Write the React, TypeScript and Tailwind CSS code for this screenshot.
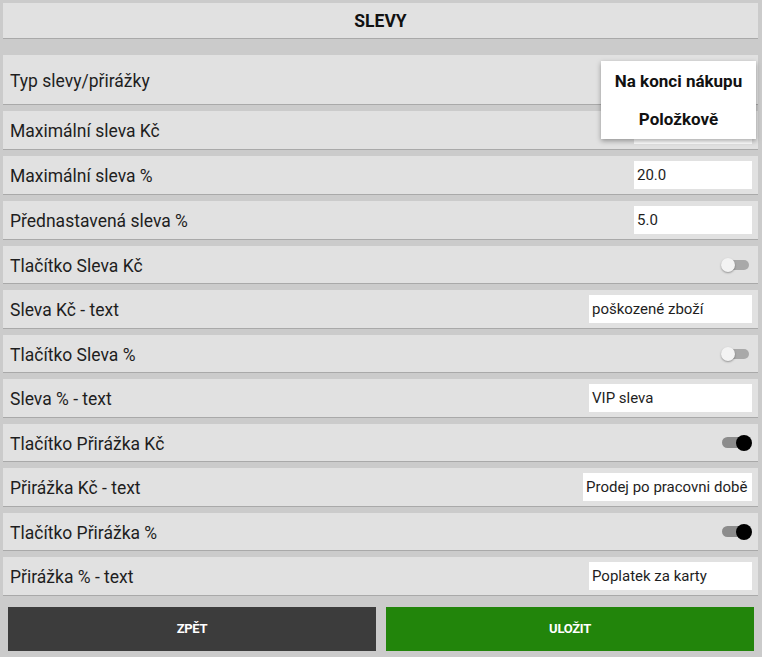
import React from 'react';

type Row =
  | { label: string; kind: 'input'; value: string; width: number }
  | { label: string; kind: 'toggle'; on: boolean }
  | { label: string; kind: 'select' };

const rows: Row[] = [
  { label: 'Typ slevy/přirážky', kind: 'select' },
  { label: 'Maximální sleva Kč', kind: 'input', value: '', width: 118 },
  { label: 'Maximální sleva %', kind: 'input', value: '20.0', width: 118 },
  { label: 'Přednastavená sleva %', kind: 'input', value: '5.0', width: 118 },
  { label: 'Tlačítko Sleva Kč', kind: 'toggle', on: false },
  { label: 'Sleva Kč - text', kind: 'input', value: 'poškozené zboží', width: 163 },
  { label: 'Tlačítko Sleva %', kind: 'toggle', on: false },
  { label: 'Sleva % - text', kind: 'input', value: 'VIP sleva', width: 163 },
  { label: 'Tlačítko Přirážka Kč', kind: 'toggle', on: true },
  { label: 'Přirážka Kč - text', kind: 'input', value: 'Prodej po pracovni době', width: 169 },
  { label: 'Tlačítko Přirážka %', kind: 'toggle', on: true },
  { label: 'Přirážka % - text', kind: 'input', value: 'Poplatek za karty', width: 163 },
];

function Toggle({ on }: { on: boolean }) {
  if (on) {
    return (
      <div className="relative w-[30px] h-[16px] flex items-center">
        <div className="w-[26px] h-[11px] rounded-full bg-[#8c8c8c]" />
        <div className="absolute right-0 top-0 w-[16px] h-[16px] rounded-full bg-black" />
      </div>
    );
  }
  return (
    <div className="relative w-[28px] h-[14px] flex items-center mr-[3px]">
      <div className="w-[26px] h-[10px] ml-[2px] rounded-full bg-[#a9a9a9]" />
      <div className="absolute left-0 top-0 w-[14px] h-[14px] rounded-full bg-[#f3f3f3] shadow-[0_1px_2px_rgba(0,0,0,0.35)]" />
    </div>
  );
}

export default function App() {
  return (
    <div
      className="relative w-[762px] h-[657px] bg-[#cbcbcb] pl-[3px] pr-[4px] pt-[3px] text-[#1e1e1e]"
      style={{ fontFamily: 'Roboto, "Liberation Sans", sans-serif' }}
    >
      <div className="h-[36px] bg-[#e1e1e1] border-b border-[#a9a9a9] flex items-center justify-center">
        <span className="text-[17.5px] font-bold text-[#111] translate-y-[1px]">SLEVY</span>
      </div>

      <div className="mt-[16px] flex flex-col gap-[6px]">
        {rows.map((r, i) => (
          <div
            key={i}
            className={
              'bg-[#e1e1e1] border-b border-[#a9a9a9] flex items-center justify-between pl-[7px] pr-[6px] ' +
              (r.kind === 'select' ? 'h-[50px]' : r.kind === 'toggle' ? 'h-[38px]' : 'h-[39px]')
            }
          >
            <span className="text-[17.5px] leading-none translate-y-[1.5px]">{r.label}</span>
            {r.kind === 'input' && (
              <div
                className="h-[28px] bg-white flex items-center pl-[3px] text-[15px] leading-none whitespace-nowrap overflow-hidden"
                style={{ width: r.width }}
              >
                {r.value}
              </div>
            )}
            {r.kind === 'toggle' && <Toggle on={r.on} />}
          </div>
        ))}
      </div>

      <div className="mt-[11px] pl-[5px] pr-[4px] flex gap-[10px]">
        <button className="flex-1 h-[44px] bg-[#3c3c3c] text-white text-[13px] font-bold tracking-[-0.3px]">
          ZPĚT
        </button>
        <button className="flex-1 h-[44px] bg-[#22850b] text-white text-[13px] font-bold tracking-[-0.3px]">
          ULOŽIT
        </button>
      </div>

      <div className="absolute left-[601px] top-[61px] w-[155px] h-[78px] bg-white shadow-[0_2px_5px_rgba(0,0,0,0.35)] flex flex-col items-center justify-center gap-[21px]">
        <span className="text-[17px] font-bold leading-none text-[#111]">Na konci nákupu</span>
        <span className="text-[17px] font-bold leading-none text-[#111]">Položkově</span>
      </div>
    </div>
  );
}
